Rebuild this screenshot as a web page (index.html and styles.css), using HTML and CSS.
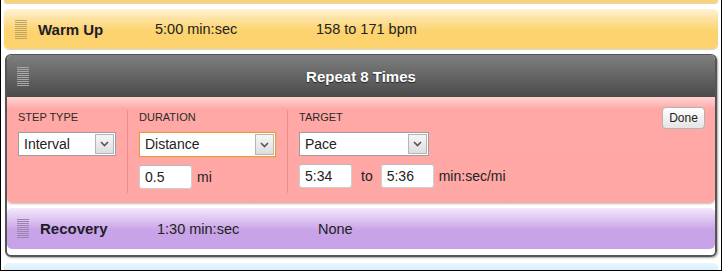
FILE: index.html
```html
<!DOCTYPE html>
<html>
<head>
<meta charset="utf-8">
<title>Workout steps</title>
<link rel="stylesheet" href="styles.css">
</head>
<body>

<div class="frame">

   <div class="step warm cut"></div>

   <div class="step warm">
      <span class="grip"></span>
      <span class="name">Warm Up</span>
      <span class="dur">5:00 min:sec</span>
      <span class="tgt">158 to 171 bpm</span>
   </div>

   <div class="group">
      <div class="grouphead">
         <span class="grip light"></span>
         <span class="title">Repeat 8 Times</span>
      </div>

      <div class="editor">
         <div class="col col1">
            <div class="label">STEP TYPE</div>
            <div class="select w98"><span class="val">Interval</span><span class="drop"><svg width="9" height="6" viewBox="0 0 9 6"><path d="M1 1 L4.5 4.5 L8 1" fill="none" stroke="#555" stroke-width="1.6"/></svg></span></div>
         </div>
         <div class="col col2">
            <div class="label">DURATION</div>
            <div class="select w137 focus"><span class="val">Distance</span><span class="drop"><svg width="9" height="6" viewBox="0 0 9 6"><path d="M1 1 L4.5 4.5 L8 1" fill="none" stroke="#555" stroke-width="1.6"/></svg></span></div>
            <div class="row">
               <div class="input">0.5</div>
               <span class="unit">mi</span>
            </div>
         </div>
         <div class="col col3">
            <div class="label">TARGET</div>
            <div class="select w130"><span class="val">Pace</span><span class="drop"><svg width="9" height="6" viewBox="0 0 9 6"><path d="M1 1 L4.5 4.5 L8 1" fill="none" stroke="#555" stroke-width="1.6"/></svg></span></div>
            <div class="row">
               <div class="input">5:34</div>
               <span class="to">to</span>
               <div class="input">5:36</div>
               <span class="unit">min:sec/mi</span>
            </div>
         </div>
         <div class="spacer"></div>
         <div class="done">Done</div>
      </div>

      <div class="step recovery">
         <span class="grip purple"></span>
         <span class="name">Recovery</span>
         <span class="dur">1:30 min:sec</span>
         <span class="tgt">None</span>
      </div>
   </div>

   <div class="step blue"></div>

</div>

</body>
</html>
```

FILE: styles.css
```css
html , body {
   margin:0px;
   padding:0px;
   background:#fff;
}

.frame {
   width:722px;
   height:271px;
   box-sizing:border-box;
   border:1px solid #000;
   border-top:0px;
   padding:0px 3px;
   overflow:hidden;
   font-family:"Liberation Sans", Arial, sans-serif;
   color:#222;
}

.step {
   display:flex;
   align-items:center;
   height:40px;
   border-radius:5px;
   box-shadow:0px 1px 1px rgba(0,0,0,0.18);
}

.step.cut {
   height:3px;
   border-radius:0px 0px 5px 5px;
}

.step.warm {
   margin-top:6px;
   background:linear-gradient(#fff3d8 0px, #fde2a0 10px, #fcd36e 22px, #fcd36e 100%);
}

.step.cut {
   margin-top:0px;
   background:#fcd36e;
}

.step .name {
   font-weight:bold;
   font-size:15px;
   width:117px;
   color:#1c1c2c;
}

.step .dur , .step .tgt {
   font-size:14.5px;
}

.step .dur {
   width:161px;
}

.grip {
   width:12px;
   height:19px;
   margin:0px 11px 0px 11px;
   background:repeating-linear-gradient(#bfa465 0px, #bfa465 1px, transparent 1px, transparent 2px);
}

.grip.light {
   background:repeating-linear-gradient(#a8a8a8 0px, #a8a8a8 1px, transparent 1px, transparent 2px);
}

.grip.purple {
   background:repeating-linear-gradient(#9c84ac 0px, #9c84ac 1px, transparent 1px, transparent 2px);
}

/* repeat group */

.group {
   margin:5px 1px 0px 1px;
   border:2px solid #555;
   border-top-width:1px;
   border-radius:6px;
   padding-bottom:6px;
   box-shadow:1px 1px 2px rgba(0,0,0,0.35);
   overflow:hidden;
}

.grouphead {
   display:flex;
   align-items:center;
   height:42px;
   background:linear-gradient(#7f7f7f, #4a4a4a);
}

.grouphead .grip {
   margin-left:10px;
}

.grouphead .title {
   flex:1;
   text-align:center;
   margin-right:33px;
   font-weight:bold;
   font-size:15px;
   color:#fff;
   text-shadow:0px 1px 1px #222;
}

.editor {
   display:flex;
   height:106px;
   box-sizing:border-box;
   padding:13px 10px 10px 0px;
   border-radius:0px 0px 5px 5px;
   background:linear-gradient(#ffd4d2 0px, #ffa8a6 12px, #ffa7a5 100%);
   box-shadow:0px 1px 2px rgba(0,0,0,0.25);
}

.col {
   border-right:1px solid #e98f8d;
   padding-left:11px;
}

.col1 {
   width:109px;
}

.col2 {
   width:148px;
}

.col3 {
   border-right:0px;
   width:240px;
}

.label {
   font-size:11px;
   line-height:14px;
   color:#2a2a2a;
   margin-bottom:8px;
}

.select {
   display:flex;
   height:24px;
   box-sizing:border-box;
   border:1px solid #9e9e9e;
   background:#fff;
   font-size:14px;
}

.select.focus {
   height:25px;
   border-color:#e49b3a;
   box-shadow:0px 0px 1px #e9a94a;
}

.w98 { width:98px; }
.w137 { width:137px; }
.w130 { width:130px; }

.select .val {
   flex:1;
   padding-left:5px;
   line-height:23px;
}

.select .drop {
   display:flex;
   align-items:center;
   justify-content:center;
   width:17px;
   margin:1px;
   border:1px solid #b5b5b5;
   background:linear-gradient(#f6f6f6, #dedede);
}

.row {
   display:flex;
   align-items:center;
   margin-top:8px;
}

.input {
   width:53px;
   height:24px;
   box-sizing:border-box;
   border:1px solid #cfcfcf;
   border-top-color:#b9b9b9;
   border-radius:3px;
   background:#fff;
   font-size:14px;
   line-height:22px;
   padding-left:5px;
}

.unit {
   margin-left:5px;
   font-size:14px;
}

.to {
   font-size:14px;
   margin:0px 8px 0px 9px;
}

.spacer {
   flex:1;
}

.done {
   align-self:flex-start;
   margin-top:-3px;
   width:43px;
   height:22px;
   box-sizing:border-box;
   border:1px solid #b4b4b4;
   border-radius:4px;
   background:linear-gradient(#ffffff, #e4e4e4);
   font-size:12px;
   line-height:20px;
   text-align:center;
   color:#222;
}

.step.recovery {
   margin-top:5px;
   height:41px;
   box-shadow:none;
   background:linear-gradient(#f3e9fb 0px, #dcc3f0 12px, #c9a3e7 22px, #c8a2e8 100%);
}

.recovery .grip {
   margin-left:10px;
}

.recovery .name {
   width:117px;
}

.step.blue {
   margin-top:6px;
   background:linear-gradient(#eaf6ff, #d3eafb 10px);
}
```
